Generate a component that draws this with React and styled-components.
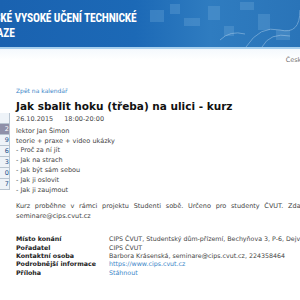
import React from 'react'
import styled, { createGlobalStyle } from 'styled-components'

const Global = createGlobalStyle`
  html, body {
    margin: 0;
    padding: 0;
    background: #fff;
    overflow: hidden;
  }
  body {
    font-family: 'DejaVu Sans', Verdana, sans-serif;
    font-size: 6.5px;
    color: #444;
  }
`

const Page = styled.div`
  width: 300px;
  height: 300px;
  overflow: hidden;
`

const Header = styled.div`
  height: 47px;
  background: linear-gradient(90deg, #1a62b0 0%, #1c69b6 45%, #2f7cc0 70%, #2a74b8 100%);
  border-bottom: 2px solid #a8d0ee;
  overflow: hidden;
  display: flex;
  align-items: center;
  position: relative;
`

const Title = styled.div`
  font-family: 'Liberation Sans Narrow', 'Roboto Condensed', 'Liberation Sans', sans-serif;
  font-weight: bold;
  font-size: 12.5px;
  line-height: 15px;
  color: #fff;
  letter-spacing: -0.2px;
  transform: scaleX(0.92);
  transform-origin: left center;
  padding-top: 2px;
  white-space: nowrap;
`

const TitleLine = styled.div`
  margin-left: ${p => p.$shift}px;
`

const Pattern = styled.svg`
  position: absolute;
  right: 0;
  top: 0;
`

const TopBar = styled.div`
  display: flex;
  justify-content: flex-end;
  padding: 7px 0 0;
  height: 37px;
  box-sizing: border-box;
  background: linear-gradient(#f4f9fd, #fff 30%);
`

const Lang = styled.span`
  color: #777;
  font-size: 6.5px;
  margin-right: -5px;
`

const Body = styled.div`
  display: flex;
`

const Calendar = styled.div`
  width: 9px;
  margin-top: 27px;
  display: flex;
  flex-direction: column;
  border-right: 1px solid #b8c4d0;
  align-self: flex-start;
`

const CalCell = styled.div`
  height: 10px;
  border-bottom: 1px solid #b8c4d0;
  background: ${p => (p.$active ? '#8f90a8' : '#eef3f8')};
  color: ${p => (p.$active ? '#fff' : '#1a4f8a')};
  font-size: 6.5px;
  line-height: 10px;
  text-align: right;
  overflow: hidden;
`

const Content = styled.div`
  flex: 1;
  padding: 0 0 0 6px;
  min-width: 0;
`

const Back = styled.a`
  display: block;
  color: #3a86c8;
  font-size: 6px;
  line-height: 10px;
  text-decoration: none;
`

const EventTitle = styled.h1`
  margin: 3px 0 2px;
  font-size: 10.5px;
  line-height: 14px;
  color: #111;
  white-space: nowrap;
`

const Lines = styled.div`
  line-height: 9.8px;
`

const DateLine = styled.div`
  display: flex;
  gap: 11px;
  margin-bottom: 2px;
`

const Para = styled.p`
  margin: 6px 0 0;
  line-height: 10px;
  text-align: justify;
  text-align-last: justify;
  width: 346px;
`

const ParaEnd = styled.span`
  display: inline-block;
`

const Info = styled.div`
  margin-top: 14px;
  display: grid;
  grid-template-columns: 93px auto;
  line-height: 8.3px;
  font-size: 6.3px;
  white-space: nowrap;
`

const Label = styled.div`
  font-weight: bold;
  color: #222;
`

const Value = styled.div`
  color: ${p => (p.$link ? '#3a86c8' : '#444')};
`

const calendar = ['', '2', '9', '6', '3', '0', '7']

const info = [
  ['Místo konání', 'CIPS ČVUT, Studentský dům-přízemí, Bechyňova 3, P-6, Dejvice'],
  ['Pořadatel', 'CIPS ČVUT'],
  ['Kontaktní osoba', 'Barbora Krásenská, seminare@cips.cvut.cz, 224358464'],
  ['Podrobnější informace', 'https://www.cips.cvut.cz', true],
  ['Příloha', 'Stáhnout', true]
]

export default function App() {
  return (
    <Page>
      <Global />
      <Header>
        <Title>
          <TitleLine $shift={-19}>ČESKÉ VYSOKÉ UČENÍ TECHNICKÉ</TitleLine>
          <TitleLine $shift={-27}>V PRAZE</TitleLine>
        </Title>
        <Pattern width="150" height="47" viewBox="0 0 150 47">
          <g fill="#6aa6d8" opacity="0.35">
            <rect x="0" y="10" width="14" height="12" />
            <rect x="20" y="4" width="10" height="10" />
            <rect x="34" y="18" width="16" height="8" />
            <rect x="58" y="6" width="12" height="14" />
            <rect x="74" y="26" width="10" height="10" />
            <rect x="90" y="2" width="14" height="8" />
            <rect x="108" y="14" width="12" height="16" />
            <rect x="126" y="30" width="14" height="10" />
          </g>
          <g stroke="#b8d6ef" strokeWidth="1" fill="none" opacity="0.45">
            <path d="M96 47 Q110 25 130 30 T150 10" />
            <path d="M112 47 Q120 32 140 36" />
            <path d="M70 40 Q80 30 95 34" />
          </g>
        </Pattern>
      </Header>
      <TopBar>
        <Lang>Česky</Lang>
      </TopBar>
      <Body>
        <Calendar>
          {calendar.map((c, i) => (
            <CalCell key={i} $active={i === 1}>
              {c}
            </CalCell>
          ))}
        </Calendar>
        <Content>
          <Back href="#">Zpět na kalendář</Back>
          <EventTitle>Jak sbalit hoku (třeba) na ulici - kurz</EventTitle>
          <Lines>
            <DateLine>
              <span>26.10.2015</span>
              <span>18:00-20:00</span>
            </DateLine>
            <div>lektor Jan Šimon</div>
            <div>teorie + praxe + video ukázky</div>
            <div>- Proč za ní jít</div>
            <div>- Jak na strach</div>
            <div>- Jak být sám sebou</div>
            <div>- Jak ji oslovit</div>
            <div>- Jak ji zaujmout</div>
          </Lines>
          <Para>
            Kurz proběhne v rámci projektu Studenti sobě. Určeno pro studenty ČVUT. Zdarma. Přihlášky na
            <br />
            <ParaEnd>seminare@cips.cvut.cz</ParaEnd>
          </Para>
          <Info>
            {info.map(([l, v, link]) => (
              <React.Fragment key={l}>
                <Label>{l}</Label>
                <Value $link={link}>{v}</Value>
              </React.Fragment>
            ))}
          </Info>
        </Content>
      </Body>
    </Page>
  )
}
